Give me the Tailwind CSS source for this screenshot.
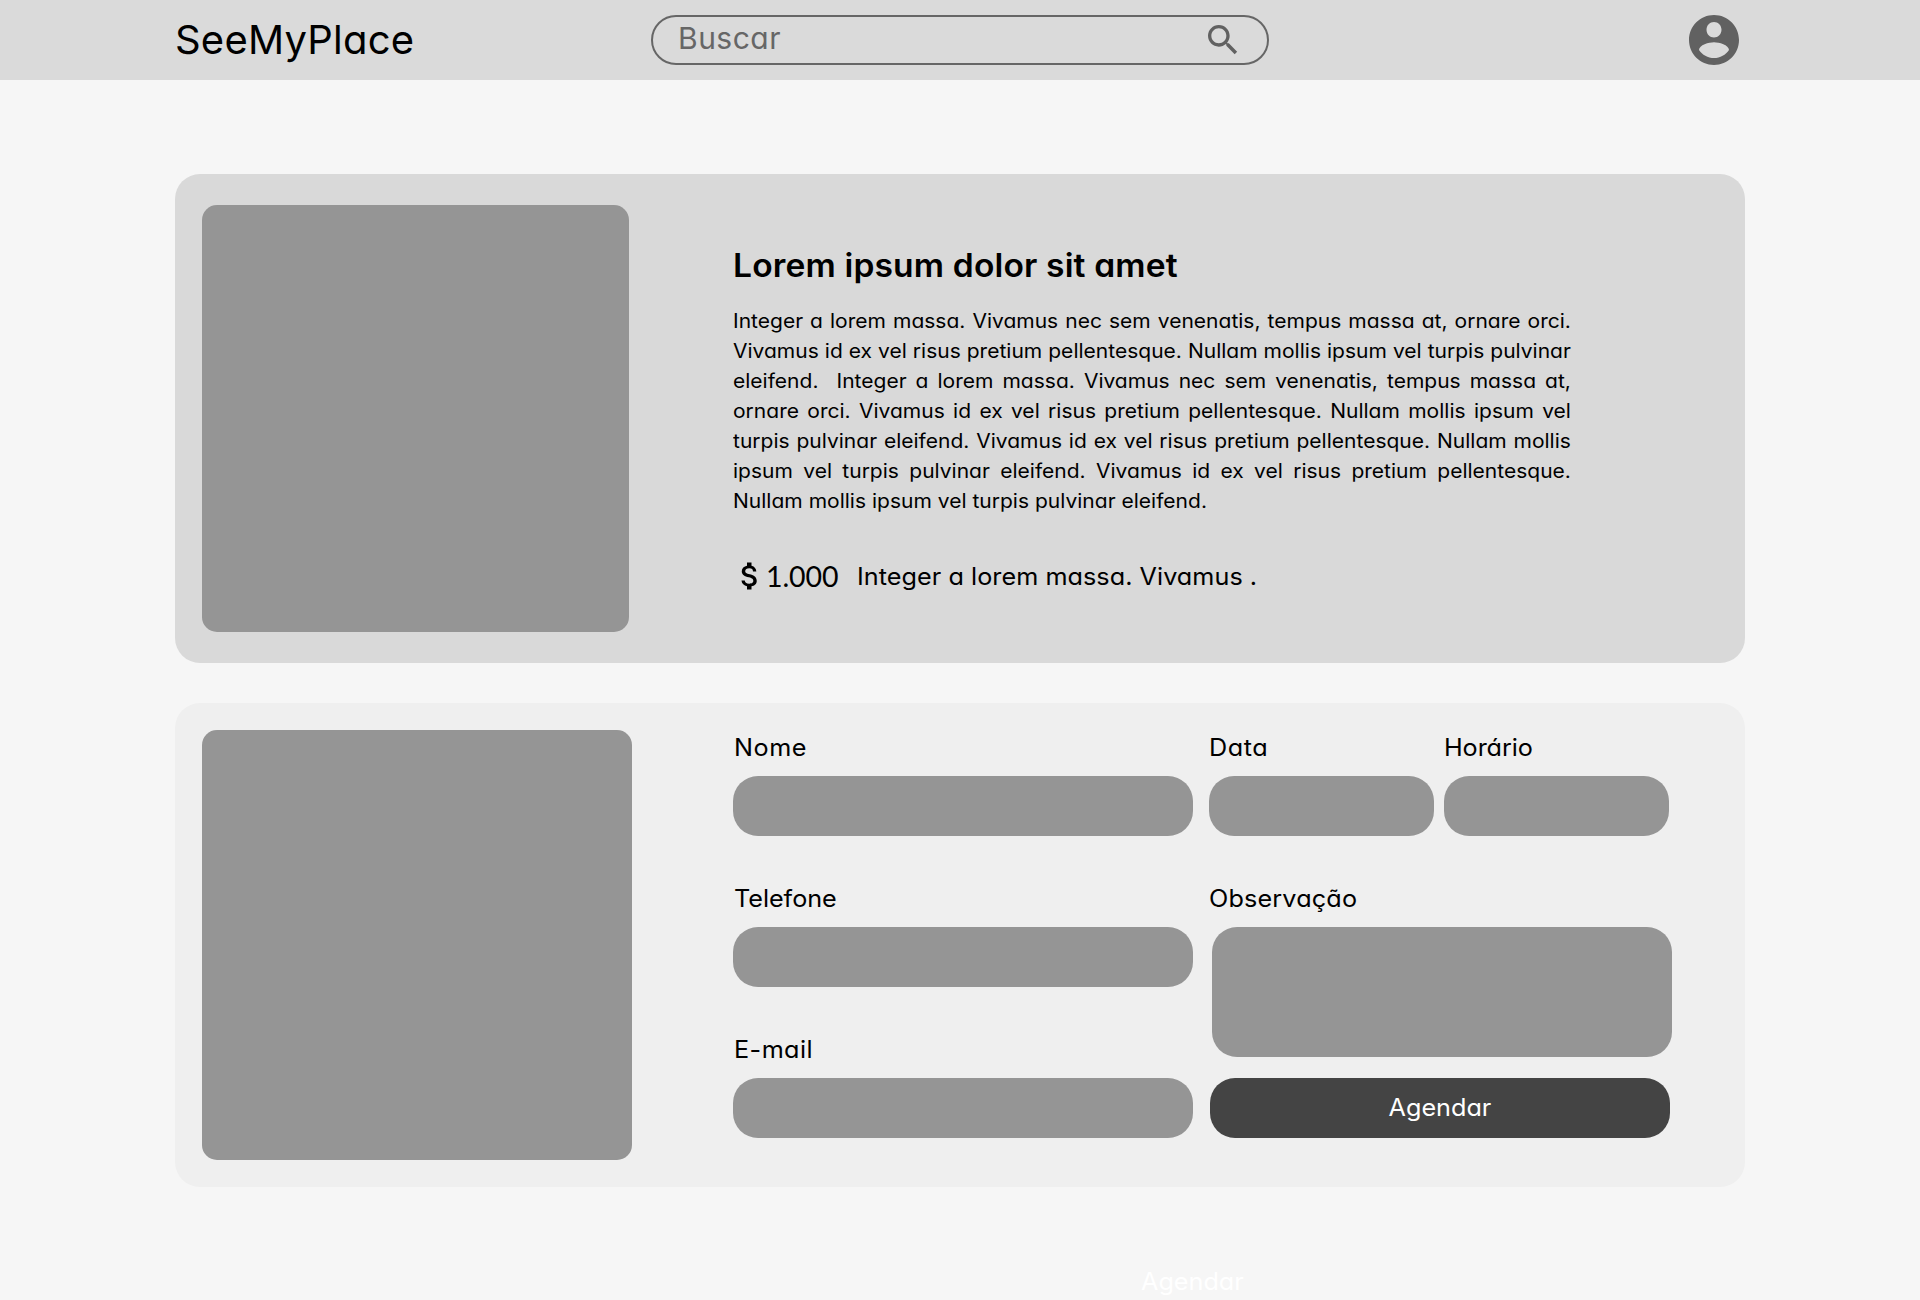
<!DOCTYPE html>
<html lang="pt-BR">
<head>
<meta charset="utf-8">
<title>SeeMyPlace</title>
<script src="https://cdn.jsdelivr.net/npm/@tailwindcss/browser@4"></script>
</head>
<body class="h-[1300px] overflow-hidden bg-[#f6f6f6] font-['Inter',sans-serif] text-black [font-feature-settings:'cv11']">

<header class="flex h-20 items-center bg-[#dadada] pr-[175px] pl-[175px]">
  <a class="w-[476px] pb-px text-[40px] leading-[60px] tracking-[0.2px]">SeeMyPlace</a>
  <div class="flex h-[50px] w-[618px] items-center justify-between rounded-[25px] border-2 border-[#666] pr-6 pl-[25px]">
    <span class="pb-1 text-[30px] leading-10 tracking-[0.5px] text-[#666]">Buscar</span>
    <svg class="size-10" viewBox="0 0 24 24" fill="#616161"><path d="M15.5 14h-.79l-.28-.27C15.41 12.59 16 11.11 16 9.5 16 5.91 13.09 3 9.5 3S3 5.91 3 9.5 5.91 16 9.5 16c1.61 0 3.09-.59 4.23-1.57l.27.28v.79l5 4.99L20.49 19l-4.99-5zm-6 0C7.01 14 5 11.99 5 9.5S7.01 5 9.5 5 14 7.01 14 9.5 11.99 14 9.5 14z"/></svg>
  </div>
  <svg class="mr-px ml-auto size-[60px]" viewBox="0 0 24 24" fill="#616161"><path d="M12 2C6.48 2 2 6.48 2 12s4.48 10 10 10 10-4.48 10-10S17.52 2 12 2zm0 2.800c1.66 0 3 1.340 3 3.100s-1.340 3.100-3 3.100-3-1.340-3-3.100 1.340-3.100 3-3.100zm0 14.400c-2.500 0-4.710-1.280-6-3.220.030-1.990 4-3.080 6-3.080 1.990 0 5.970 1.090 6 3.080-1.290 1.940-3.500 3.220-6 3.220z"/></svg>
</header>

<main class="mx-[175px] mt-[94px] flex flex-col gap-10">
  <section class="flex h-[489px] gap-[104px] rounded-[25px] bg-[#d9d9d9] pt-[31px] pl-[27px]">
    <div class="size-[427px] rounded-[15px] bg-[#959595]"></div>
    <div class="w-[838px] pt-[37px]">
      <h1 class="origin-left scale-x-[1.05] text-[32px] leading-[48px] font-semibold tracking-[0.13px]">Lorem ipsum dolor sit amet</h1>
      <div class="mt-4 w-[798px] origin-left scale-x-[1.05] text-[20px] leading-[30px] tracking-[0.01px]">
        <p class="[text-align-last:justify]">Integer a lorem massa. Vivamus nec sem venenatis, tempus massa at, ornare orci.</p>
        <p class="[text-align-last:justify]">Vivamus id ex vel risus pretium pellentesque. Nullam mollis ipsum vel turpis pulvinar</p>
        <p class="[text-align-last:justify]">eleifend.&nbsp; Integer a lorem massa. Vivamus nec sem venenatis, tempus massa at,</p>
        <p class="[text-align-last:justify]">ornare orci. Vivamus id ex vel risus pretium pellentesque. Nullam mollis ipsum vel</p>
        <p class="[text-align-last:justify]">turpis pulvinar eleifend. Vivamus id ex vel risus pretium pellentesque. Nullam mollis</p>
        <p class="[text-align-last:justify]">ipsum vel turpis pulvinar eleifend. Vivamus id ex vel risus pretium pellentesque.</p>
        <p>Nullam mollis ipsum vel turpis pulvinar eleifend.</p>
      </div>
      <div class="mt-[42px] flex h-9 leading-9">
        <svg class="-ml-px size-9" viewBox="0 0 24 24"><path d="M11.8 10.9c-2.27-.59-3-1.2-3-2.15 0-1.09 1.01-1.85 2.7-1.85 1.78 0 2.44.85 2.5 2.1h2.21c-.07-1.72-1.12-3.3-3.21-3.81V3h-3v2.16c-1.94.42-3.5 1.68-3.5 3.61 0 2.31 1.91 3.46 4.7 4.13 2.5.6 3 1.48 3 2.41 0 .69-.49 1.79-2.7 1.79-2.06 0-2.87-.92-2.98-2.1h-2.2c.12 2.19 1.76 3.42 3.68 3.83V21h3v-2.15c1.95-.37 3.5-1.5 3.5-3.55 0-2.84-2.43-3.81-4.7-4.4z"/></svg>
        <span class="ml-[-2px] w-[91px] font-['Lato',sans-serif] text-[28.500px] tracking-[-0.08px]">1.000</span>
        <span class="origin-left scale-x-[1.05] pt-px text-2xl leading-9 tracking-[0.04px]">Integer a lorem massa. Vivamus .</span>
      </div>
    </div>
  </section>

  <section class="flex h-[484px] rounded-[25px] bg-[#efefef] pl-[27px]">
    <div class="mt-[27px] size-[430px] rounded-[15px] bg-[#959595]"></div>
    <form class="ml-[101px] flex gap-4 pt-[27px] text-2xl leading-9">
      <div class="flex w-[460px] flex-col gap-[45px]">
        <label class="flex flex-col gap-2.5"><span class="origin-left scale-x-[1.05] pl-px tracking-[0.5px]">Nome</span><span class="h-[60px] rounded-[25px] bg-[#959595]"></span></label>
        <label class="flex flex-col gap-2.5"><span class="origin-left scale-x-[1.05] pl-px tracking-[-0.050px]">Telefone</span><span class="h-[60px] rounded-[25px] bg-[#959595]"></span></label>
        <label class="flex flex-col gap-2.5"><span class="origin-left scale-x-[1.05] pl-px tracking-[0.4px]">E-mail</span><span class="h-[60px] rounded-[25px] bg-[#959595]"></span></label>
      </div>
      <div class="flex w-[463px] flex-col">
        <div class="flex gap-2.5">
          <label class="flex w-[225px] flex-col gap-2.5"><span class="origin-left scale-x-[1.05] tracking-[0.5px]">Data</span><span class="h-[60px] rounded-[25px] bg-[#959595]"></span></label>
          <label class="flex w-[225px] flex-col gap-2.5"><span class="origin-left scale-x-[1.05] tracking-[-0.1px]">Horário</span><span class="h-[60px] rounded-[25px] bg-[#959595]"></span></label>
        </div>
        <label class="mt-[45px] flex flex-col gap-2.5"><span class="origin-left scale-x-[1.05] tracking-[0.15px]">Observação</span><span class="ml-[3px] h-[130px] rounded-[25px] bg-[#959595]"></span></label>
        <button type="button" class="mt-[21px] ml-px flex h-[60px] w-[460px] items-center justify-center rounded-[25px] bg-[#444] text-white"><span class="scale-x-[1.05]">Agendar</span></button>
      </div>
    </form>
  </section>
</main>

<p class="mt-[77px] ml-[1141px] w-40 origin-left scale-x-[1.05] text-2xl leading-9 text-white">Agendar</p>
</body>
</html>
